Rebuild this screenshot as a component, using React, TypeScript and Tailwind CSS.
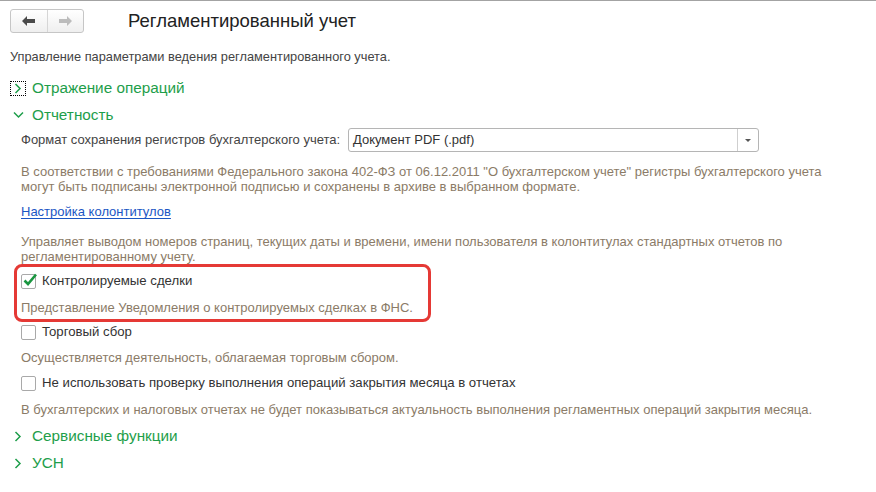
import React from 'react';

const font = "font-['Liberation_Sans',Arial,sans-serif]";

const ArrowLeft = ({ color }: { color: string }) => (
  <svg width="13" height="10" viewBox="0 0 13 10">
    <path d="M0 5 L5 0 L5 3 L13 3 L13 7 L5 7 L5 10 Z" fill={color} />
  </svg>
);

const ArrowRight = ({ color }: { color: string }) => (
  <svg width="13" height="10" viewBox="0 0 13 10">
    <path d="M13 5 L8 0 L8 3 L0 3 L0 7 L8 7 L8 10 Z" fill={color} />
  </svg>
);

const ChevronRight = () => (
  <svg width="8" height="11" viewBox="0 0 8 11">
    <path d="M1.5 1 L6 5.5 L1.5 10" fill="none" stroke="#1e9e4a" strokeWidth="1.5" />
  </svg>
);

const ChevronDown = () => (
  <svg width="11" height="8" viewBox="0 0 11 8">
    <path d="M1 1.5 L5.5 6 L10 1.5" fill="none" stroke="#1e9e4a" strokeWidth="1.5" />
  </svg>
);

const Checkbox = ({ checked }: { checked?: boolean }) => (
  <div className="relative w-[15px] h-[15px] border border-[#a9a9a9] rounded-[2px] bg-white shrink-0">
    {checked && (
      <svg className="absolute -top-[2px] left-[1px]" width="15" height="14" viewBox="0 0 15 14">
        <path d="M1.5 7.5 L5 11 L13 1.5" fill="none" stroke="#1a9640" strokeWidth="2.6" />
      </svg>
    )}
  </div>
);

const Group = ({ title, open, focused }: { title: string; open?: boolean; focused?: boolean }) => (
  <div className="flex items-center h-full">
    <div
      className={
        focused
          ? 'w-[16px] h-[15px] ml-[10px] mr-[6px] flex items-center justify-center border border-dotted border-black'
          : 'w-[16px] h-[15px] ml-[10px] mr-[6px] flex items-center justify-center'
      }
    >
      {open ? <ChevronDown /> : <ChevronRight />}
    </div>
    <span className="text-[15.3px] text-[#1e9e4a]">{title}</span>
  </div>
);

const Hint = ({ children }: { children: React.ReactNode }) => (
  <p className="text-[13px] leading-[15px] text-[#8b7b67]">{children}</p>
);

export default function App() {
  return (
    <div className={`${font} bg-white w-[876px] h-[492px] border-t border-[#a3a3a3] text-[#333]`}>
      <div className="h-[40px] flex items-center">
        <div className="ml-[10px] flex h-[24px] w-[74px] rounded-[3px] border border-[#c6c6c6] bg-gradient-to-b from-white to-[#efefef]">
          <div className="flex-1 flex items-center justify-center border-r border-[#d6d6d6]">
            <ArrowLeft color="#4a4a4a" />
          </div>
          <div className="flex-1 flex items-center justify-center">
            <ArrowRight color="#bcbcbc" />
          </div>
        </div>
        <h1 className="ml-[44px] text-[18.5px] text-[#222]">Регламентированный учет</h1>
      </div>

      <div className="h-[32px] flex items-center pl-[10px] text-[12.8px] text-[#444]">
        Управление параметрами ведения регламентированного учета.
      </div>

      <div className="h-[30px]">
        <Group title="Отражение операций" focused />
      </div>
      <div className="h-[24px]">
        <Group title="Отчетность" open />
      </div>

      <div className="pl-[21px]">
        <div className="h-[26px] flex items-center text-[13px] text-[#444]">
          <span className="w-[327px]">Формат сохранения регистров бухгалтерского учета:</span>
          <div className="flex h-[24px] w-[411px] rounded-[3px] border border-[#b5b5b5] bg-white">
            <span className="flex-1 flex items-center pl-[4px] text-[#333]">Документ PDF (.pdf)</span>
            <div className="w-[21px] flex items-center justify-center border-l border-[#cfcfcf]">
              <div className="w-0 h-0 border-l-[3px] border-r-[3px] border-t-[3px] border-l-transparent border-r-transparent border-t-[#555]" />
            </div>
          </div>
        </div>

        <div className="pt-[11px]">
          <Hint>
            В соответствии с требованиями Федерального закона 402-ФЗ от 06.12.2011 "О бухгалтерском учете" регистры бухгалтерского учета
            <br />
            могут быть подписаны электронной подписью и сохранены в архиве в выбранном формате.
          </Hint>
        </div>

        <div className="h-[36px] flex items-center">
          <a className="text-[13px] text-[#1b56c4] underline underline-offset-2">Настройка колонтитулов</a>
        </div>

        <div className="pt-[4px]">
          <Hint>
            Управляет выводом номеров страниц, текущих даты и времени, имени пользователя в колонтитулах стандартных отчетов по
            <br />
            регламентированному учету.
          </Hint>
        </div>
      </div>

      <div className="ml-[14px] w-[417px] h-[58px] border-[3px] border-[#e53935] rounded-[8px] pl-[4px]">
        <div className="h-[28px] flex items-center gap-[6px]">
          <Checkbox checked />
          <span className="text-[13.2px] text-[#333]">Контролируемые сделки</span>
        </div>
        <div className="h-[24px] flex items-center">
          <Hint>Представление Уведомления о контролируемых сделках в ФНС.</Hint>
        </div>
      </div>

      <div className="pl-[21px]">
        <div className="h-[20px] flex items-center gap-[6px]">
          <Checkbox />
          <span className="text-[13.2px] text-[#333]">Торговый сбор</span>
        </div>
        <div className="h-[30px] flex items-center">
          <Hint>Осуществляется деятельность, облагаемая торговым сбором.</Hint>
        </div>
        <div className="h-[22px] flex items-center gap-[6px]">
          <Checkbox />
          <span className="text-[13.2px] text-[#333]">Не использовать проверку выполнения операций закрытия месяца в отчетах</span>
        </div>
        <div className="h-[30px] flex items-center">
          <Hint>В бухгалтерских и налоговых отчетах не будет показываться актуальность выполнения регламентных операций закрытия месяца.</Hint>
        </div>
      </div>

      <div className="h-[24px]">
        <Group title="Сервисные функции" />
      </div>
      <div className="h-[30px]">
        <Group title="УСН" />
      </div>
    </div>
  );
}
